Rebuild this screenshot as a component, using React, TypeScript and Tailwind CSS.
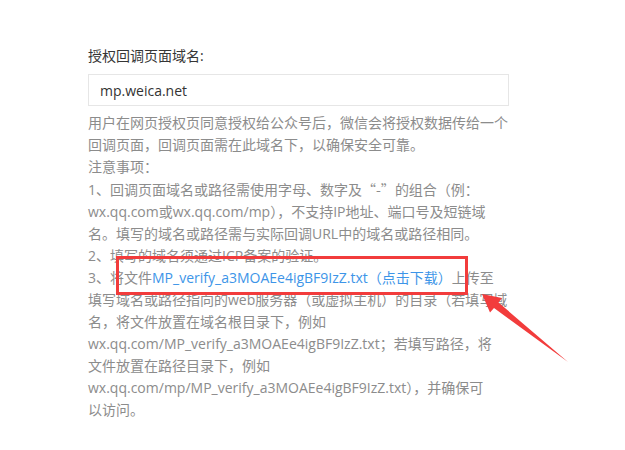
export default function App() {
  const font = { fontFamily: '"Open Sans", "Noto Sans CJK SC", sans-serif' };
  return (
    <div className="relative w-[625px] h-[450px] bg-white overflow-hidden" style={font}>
      <div className="pl-[88px] pt-[46px]">
        <div className="text-[14px] leading-[20px] text-[#353535]">授权回调页面域名:</div>
        <div className="mt-[8px] w-[421px] h-[32px] border border-[#e6e6e6] pl-[11px] flex items-center text-[14px] text-[#333]">
          mp.weica.net
        </div>
        <div className="mt-[6px] text-[14px] leading-[22px] text-[#8c8c8c] whitespace-nowrap">
          <div>用户在网页授权页同意授权给公众号后，微信会将授权数据传给一个</div>
          <div>回调页面，回调页面需在此域名下，以确保安全可靠。</div>
          <div>注意事项：</div>
          <div>
            1、回调页面域名或路径需使用字母、数字及
            <span style={{ fontFamily: '"Noto Sans CJK SC", sans-serif' }}>“-”</span>
            的组合（例：
          </div>
          <div>wx.qq.com或wx.qq.com/mp），不支持IP地址、端口号及短链域</div>
          <div>名。填写的域名或路径需与实际回调URL中的域名或路径相同。</div>
          <div>2、填写的域名须通过ICP备案的验证。</div>
          <div>
            3、将文件<a className="text-[#3d95e8]" href="#">MP_verify_a3MOAEe4igBF9IzZ.txt（点击下载）</a>上传至
          </div>
          <div>填写域名或路径指向的web服务器（或虚拟主机）的目录（若填写域</div>
          <div>名，将文件放置在域名根目录下，例如</div>
          <div>wx.qq.com/MP_verify_a3MOAEe4igBF9IzZ.txt；若填写路径，将</div>
          <div>文件放置在路径目录下，例如</div>
          <div>wx.qq.com/mp/MP_verify_a3MOAEe4igBF9IzZ.txt），并确保可</div>
          <div>以访问。</div>
        </div>
      </div>

      {/* annotation: red box + arrow */}
      <div className="absolute left-[116px] top-[256px] w-[352px] h-[39px] border-[3px] border-[#f23c3c]" />
      <svg className="absolute left-0 top-0" width="625" height="450" viewBox="0 0 625 450">
        <polygon
          points="482,294 490,312.5 494,308 568,362 498.5,302.5 502,298"
          fill="#f23c3c"
        />
      </svg>
    </div>
  );
}
